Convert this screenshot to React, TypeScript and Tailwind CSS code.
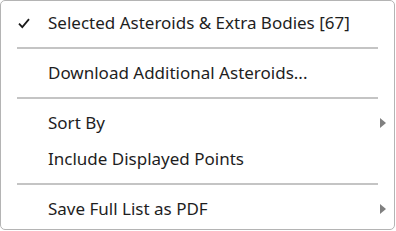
import React from 'react';

interface MenuItem {
  label: string;
  checked?: boolean;
  submenu?: boolean;
}

const groups: MenuItem[][] = [
  [{ label: 'Selected Asteroids & Extra Bodies [67]', checked: true }],
  [{ label: 'Download Additional Asteroids...' }],
  [{ label: 'Sort By', submenu: true }, { label: 'Include Displayed Points' }],
  [{ label: 'Save Full List as PDF', submenu: true }],
];

function Row({ item }: { item: MenuItem }) {
  return (
    <div className="relative flex h-[36px] items-center pl-[47px] pr-[17px]">
      {item.checked && (
        <svg className="absolute left-[17px] top-[13px]" width="12" height="11" viewBox="0 0 12 11">
          <path d="M1 5.6 L4.3 9.2 L11 1.2" fill="none" stroke="#1a1a1a" strokeWidth="1.8" />
        </svg>
      )}
      <span className="flex-1 whitespace-nowrap">{item.label}</span>
      {item.submenu && (
        <svg className="absolute left-[379px] top-[13px]" width="6" height="10" viewBox="0 0 6 10">
          <path d="M0 0 L6 5 L0 10 Z" fill="#808080" />
        </svg>
      )}
    </div>
  );
}

export default function App() {
  return (
    <div className="h-[231px] w-[396px] bg-white">
      <div
        className="flex h-[230px] w-[395px] flex-col rounded-[5px] border border-[#b4b4b4] bg-white pt-[4px] text-[17px] text-[#1e1e1e]"
        style={{ fontFamily: '"Noto Sans", "Open Sans", sans-serif' }}
      >
        {groups.map((group, gi) => (
          <React.Fragment key={gi}>
            {gi > 0 && (
              <div className="flex h-[14px] items-center px-[16px]">
                <div className="h-[2px] w-full bg-[#c4c4c4]" />
              </div>
            )}
            {group.map((item) => (
              <Row key={item.label} item={item} />
            ))}
          </React.Fragment>
        ))}
      </div>
    </div>
  );
}
